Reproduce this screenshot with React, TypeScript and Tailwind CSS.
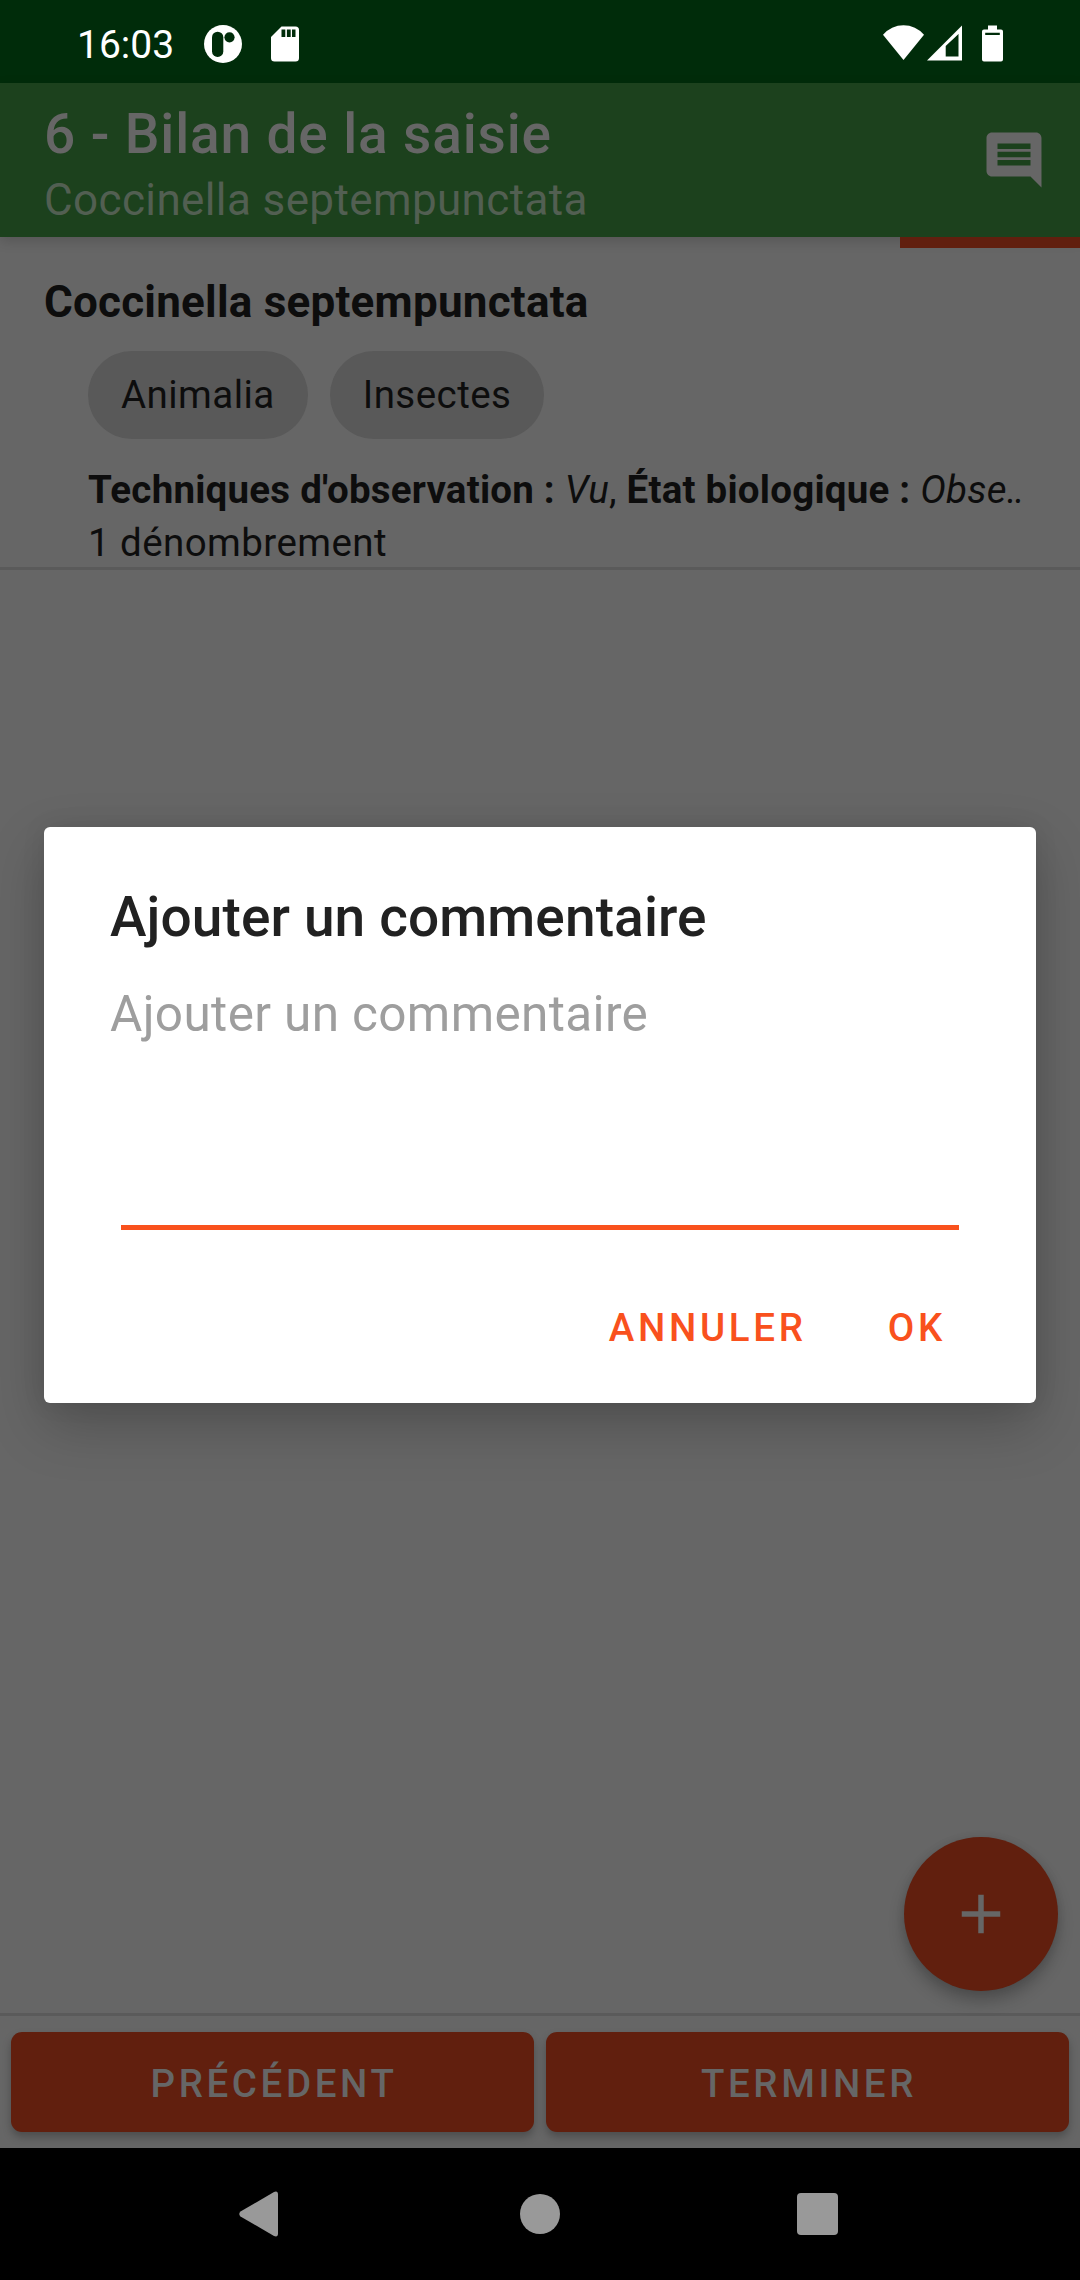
import React from "react";
import { MdAdd, MdComment } from "react-icons/md";

function StatusBar() {
  return (
    <div className="flex h-[83px] items-center bg-[#002c0a] pt-[6px] pr-[77px] pl-[77px] text-white">
      <span className="w-[127px] text-[39px] leading-[46px]">16:03</span>
      <svg className="-mt-[2px] h-[38px] w-[38px]" viewBox="0 0 38 38">
        <circle cx="19" cy="19" r="19" fill="#fff" />
        <rect x="8" y="6.7" width="11.3" height="25.3" rx="5.6" fill="#002c0a" />
        <circle cx="25.5" cy="12.3" r="5.1" fill="#002c0a" />
      </svg>
      <svg className="-mt-[2px] ml-[28.5px] h-[36px] w-[28px]" viewBox="0 0 28 36">
        <path d="M10.5 0.5H24.500Q28 0.5 28 4V32Q28 35.500 24.500 35.500H3.500Q0 35.500 0 32V11Z" fill="#fff" />
        <path d="M10.500 3.600h3.800v7.300h-3.800zM15.900 3.600h3.800v7.300h-3.800zM21 3.600h3.500v7.300h-3.500z" fill="#002c0a" />
      </svg>
      <div className="-mt-[3px] ml-auto flex items-center">
        <svg className="h-[36px] w-[41px]" viewBox="0 0 41 36">
          <path d="M0 9.800A27 27 0 0 1 41 9.800L20.500 35Z" fill="#fff" />
        </svg>
        <svg className="ml-[3px] h-[36px] w-[35px]" viewBox="0 0 35 36">
          <path fillRule="evenodd" d="M0 35.500L35 0.500V35.500ZM18.700 31.500H31.500V9L18.700 21Z" fill="#fff" />
        </svg>
        <svg className="ml-[20px] h-[37px] w-[21px]" viewBox="0 0 21 37">
          <path fillRule="evenodd" d="M6 0.500H15V4.500H19Q21 4.500 21 6.500V34.500Q21 36.500 19 36.500H2Q0 36.500 0 34.500V6.500Q0 4.500 2 4.500H6ZM3.200 7.800V10H17.800V7.800Z" fill="#fff" />
        </svg>
      </div>
    </div>
  );
}

function AppBar() {
  return (
    <header className="relative z-10 flex h-[154px] justify-between bg-[#1c411d] pt-[19px] pr-[33.5px] pl-[44px] shadow-[0_4px_12px_rgba(0,0,0,0.16)]">
      <div>
        <h1 className="text-[55px] leading-[64px] font-medium tracking-[0.85px] text-[#666]">6 - Bilan de la saisie</h1>
        <p className="mt-[8px] text-[44px] leading-[52px] tracking-[0.38px] text-[#525f52]">Coccinella septempunctata</p>
      </div>
      <MdComment className="mt-[25px] h-[66px] w-[66px] text-[#666]" />
    </header>
  );
}

function Chip({ label }: { label: string }) {
  return (
    <span className="flex h-[88px] items-center rounded-full bg-[#595959] px-[33px] text-[38.5px] tracking-[0.45px]">{label}</span>
  );
}

function TaxonItem() {
  return (
    <section className="h-[333px] border-b-[3px] border-[#5a5a5a] pt-[39px] pl-[44px] text-[#0d0d0d]">
      <h2 className="text-[44px] leading-[52px] font-bold tracking-[0.22px]">Coccinella septempunctata</h2>
      <div className="mt-[23px] flex gap-[22px] pl-[44px]">
        <Chip label="Animalia" />
        <Chip label="Insectes" />
      </div>
      <div className="mt-[24px] pl-[44px] text-[38.5px] leading-[53px] whitespace-nowrap">
        <p className="tracking-[0.22px]">
          <b>Techniques d'observation :</b> <i>Vu</i>, <b>État biologique :</b> <i>Obse‥</i>
        </p>
        <p className="tracking-[0.43px]">1 dénombrement</p>
      </div>
    </section>
  );
}

function NavButton({ label }: { label: string }) {
  return (
    <button className="h-[100px] flex-1 rounded-[11px] bg-[#611f0e] pt-[3px] pl-[3px] text-[38.5px] font-medium tracking-[3.6px] text-[#666] shadow-[0_5px_8px_rgba(0,0,0,0.25)]">
      {label}
    </button>
  );
}

function CommentDialog() {
  return (
    <div className="absolute top-[827px] left-[44px] z-20 flex h-[576px] w-[992px] flex-col rounded-[6px] bg-white px-[66px] pt-[58px] shadow-[0_22px_56px_rgba(0,0,0,0.22),0_0_24px_rgba(0,0,0,0.08)]">
      <h2 className="text-[55px] leading-[64px] font-medium tracking-[0.12px] text-[#212121]">Ajouter un commentaire</h2>
      <div className="mx-[11px] mt-[36px] h-[245px] border-b-[5.5px] border-[#f9511d]">
        <p className="-ml-[11px] text-[49.5px] leading-[58px] tracking-[0.36px] text-[#9e9e9e]">Ajouter un commentaire</p>
      </div>
      <div className="mt-[75px] flex justify-end gap-[81px] pr-[24px] text-[38.5px] leading-[46px] font-medium tracking-[3.7px] text-[#f9511d]">
        <button>ANNULER</button>
        <button>OK</button>
      </div>
    </div>
  );
}

function SystemNav() {
  return (
    <nav className="flex h-[132px] items-center bg-black pl-[239px]">
      <svg className="h-[46px] w-[40px]" viewBox="0 0 40 46" fill="#999">
        <path d="M1.500 20.500Q-1 23 1.500 25.500L35 45Q39 46.500 39 42.500V3.500Q39 -0.500 35 1Z" />
      </svg>
      <div className="ml-[241px] h-[40px] w-[40px] rounded-full bg-[#999]" />
      <div className="ml-[237px] h-[42px] w-[41px] rounded-[4px] bg-[#999]" />
    </nav>
  );
}

export default function App() {
  return (
    <div className="relative flex h-[2280px] w-[1080px] flex-col overflow-hidden bg-[#666] font-[Roboto,sans-serif]">
      <StatusBar />
      <AppBar />
      <main className="relative flex-1">
        <div className="absolute top-0 right-0 z-20 h-[11px] w-[180px] bg-[#611f0e]" />
        <TaxonItem />
        <button className="absolute right-[22px] bottom-[22px] flex h-[154px] w-[154px] items-center justify-center rounded-full bg-[#611f0e] shadow-[0_10px_16px_rgba(0,0,0,0.24),0_0_8px_rgba(0,0,0,0.08)]">
          <MdAdd className="h-[66px] w-[66px] text-[#666]" />
        </button>
      </main>
      <footer className="flex h-[135px] gap-[12px] border-t-[3px] border-[#5a5a5a] px-[11px] pt-[16px]">
        <NavButton label="PRÉCÉDENT" />
        <NavButton label="TERMINER" />
      </footer>
      <SystemNav />
      <CommentDialog />
    </div>
  );
}
